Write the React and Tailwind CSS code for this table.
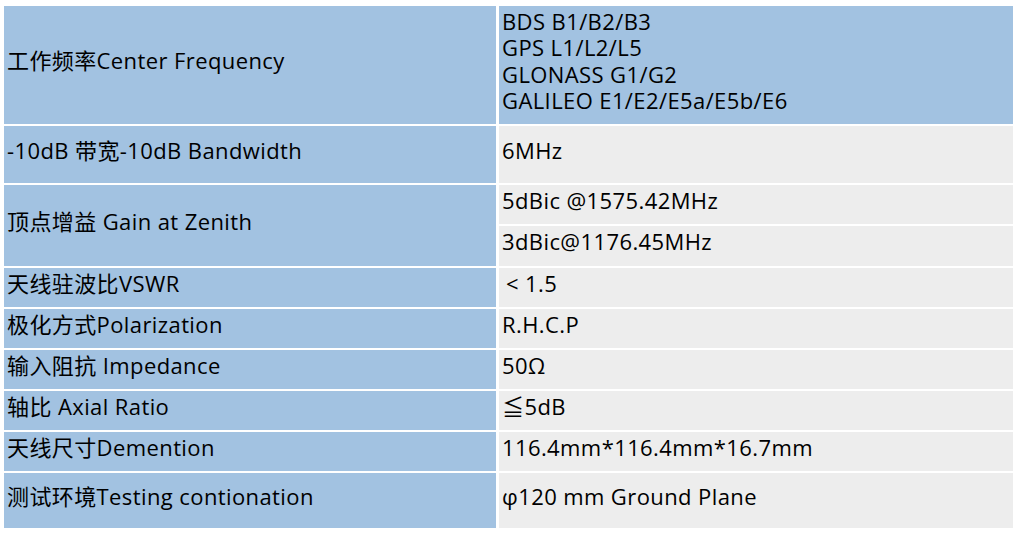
import React from "react";

const font = { fontFamily: '"Open Sans", "Noto Sans CJK SC", sans-serif' };

function L({ children, h }) {
  return (
    <div className={`bg-[#a2c2e1] flex items-center pl-[3px] pb-[10px] text-black whitespace-nowrap ${h}`}>
      {children}
    </div>
  );
}

function R({ children, h, extra = "pl-[3px]" }) {
  return (
    <div className={`bg-[#ededed] flex items-center pb-[10px] text-black whitespace-nowrap ${h} ${extra}`}>
      {children}
    </div>
  );
}

export default function App() {
  return (
    <div
      className="w-[1017px] h-[537px] bg-white pt-[6px] pl-[4px] text-[22px] leading-[26px] tracking-[0.4px] overflow-hidden"
      style={font}
    >
      <div className="grid grid-cols-[492px_514px] gap-x-[3px] gap-y-[2px]">
        <L h="h-[118px]">工作频率Center Frequency</L>
        <div className="bg-[#a2c2e1] h-[118px] pl-[3px] pt-[2px] leading-[26.4px] text-black whitespace-nowrap">
          <div>BDS B1/B2/B3</div>
          <div>GPS L1/L2/L5</div>
          <div>GLONASS G1/G2</div>
          <div>GALILEO E1/E2/E5a/E5b/E6</div>
        </div>

        <L h="h-[57px]">-10dB 带宽-10dB Bandwidth</L>
        <R h="h-[57px]">6MHz</R>

        <L h="h-[81px]">顶点增益 Gain at Zenith</L>
        <div className="flex flex-col gap-y-[2px] h-[81px]">
          <R h="h-[39px]">5dBic @1575.42MHz</R>
          <R h="h-[40px]">3dBic@1176.45MHz</R>
        </div>

        <L h="h-[39px]">天线驻波比VSWR</L>
        <R h="h-[39px]" extra="pl-[7px]">&lt; 1.5</R>

        <L h="h-[39px]">极化方式Polarization</L>
        <R h="h-[39px]">R.H.C.P</R>

        <L h="h-[39px]">输入阻抗 Impedance</L>
        <R h="h-[39px]">50Ω</R>

        <L h="h-[39px]">轴比 Axial Ratio</L>
        <R h="h-[39px]">≦5dB</R>

        <L h="h-[39px]">天线尺寸Demention</L>
        <R h="h-[39px]">116.4mm*116.4mm*16.7mm</R>

        <L h="h-[55px]">测试环境Testing contionation</L>
        <R h="h-[55px]">φ120 mm Ground Plane</R>
      </div>
    </div>
  );
}
